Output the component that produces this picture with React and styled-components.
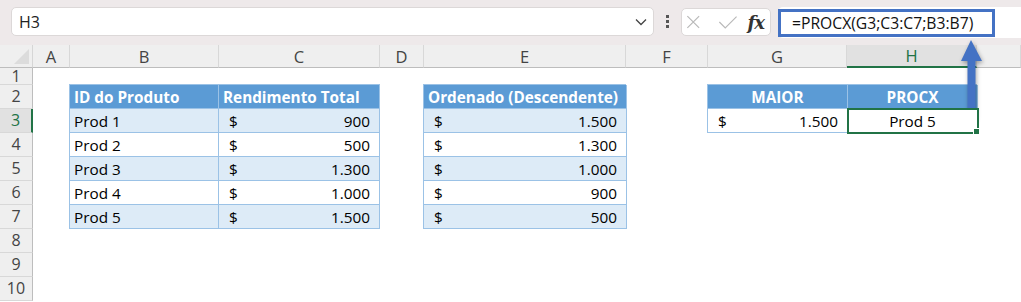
import styled, { createGlobalStyle } from "styled-components";

const GlobalStyle = createGlobalStyle`
  html, body {
    margin: 0;
    padding: 0;
    background: #ffffff;
  }
  body {
    font-family: "Open Sans", "Noto Sans", sans-serif;
    overflow: hidden;
  }
`;

const Page = styled.div`
  position: relative;
  width: 1021px;
  height: 302px;
  overflow: hidden;
  background: #ffffff;
`;

/* formula bar */
const TopBar = styled.div`
  height: 45px;
  box-sizing: border-box;
  padding: 7px 0 0 11px;
  display: flex;
  align-items: flex-start;
  background: #eee9ea;
`;

const NameBox = styled.div`
  width: 643px;
  height: 29px;
  box-sizing: border-box;
  display: flex;
  align-items: center;
  justify-content: space-between;
  padding: 0 6px 0 7px;
  background: #fff;
  border: 1px solid #dcd8d8;
  border-radius: 5px;
  font-size: 16px;
  color: #222;
`;

const Dots = styled.div`
  width: 27px;
  height: 29px;
  display: flex;
  flex-direction: column;
  align-items: center;
  justify-content: center;
  gap: 2px;

  span {
    width: 3px;
    height: 3px;
    background: #555;
  }
`;

const ToolBox = styled.div`
  width: 90px;
  height: 28px;
  margin-top: 1px;
  box-sizing: border-box;
  display: flex;
  align-items: center;
  gap: 4px;
  padding: 0 6px 0 4px;
  background: #fff;
  border: 1px solid #dcd8d8;
  border-radius: 5px;
`;

const Fx = styled.span`
  margin-left: 6px;
  font-family: "DejaVu Serif", "Liberation Serif", serif;
  font-style: italic;
  font-weight: bold;
  font-size: 18px;
  color: #333;
  letter-spacing: -1px;
`;

const FormulaField = styled.div`
  flex: 1;
  margin-left: 7px;
  height: 31px;
  background: #fff;
  border-radius: 5px 0 0 5px;
  display: flex;
  align-items: flex-start;
`;

const FormulaHighlight = styled.div`
  width: 217px;
  height: 28px;
  margin-top: 2px;
  box-sizing: border-box;
  border: 3px solid #4472c4;
  padding-left: 11px;
  display: flex;
  align-items: center;
  font-size: 15.7px;
  color: #111;
  white-space: nowrap;
`;

/* sheet */
const Sheet = styled.div`
  display: grid;
  grid-template-columns: 33px 37px 149px 161px 44px 202px 82px 139px 130px 1fr;
  grid-template-rows: 23px 17px repeat(9, 24px);
`;

const Corner = styled.div`
  grid-column: 1;
  grid-row: 1;
  background: #efefef;
  border-bottom: 1px solid #bdbdbd;
  border-right: 1px solid #d6d6d6;
  position: relative;

  &::after {
    content: "";
    position: absolute;
    right: 3px;
    bottom: 3px;
    border-style: solid;
    border-width: 0 0 15px 15px;
    border-color: transparent transparent #dcdcdc transparent;
  }
`;

const ColHead = styled.div`
  grid-row: 1;
  display: flex;
  align-items: center;
  justify-content: center;
  background: ${(p) => (p.$active ? "#e1e1e1" : "#efefef")};
  border-bottom: ${(p) => (p.$active ? "2px solid #217346" : "1px solid #bdbdbd")};
  border-right: 1px solid #d8d8d8;
  font-size: 16.5px;
  line-height: 1;
  color: ${(p) => (p.$active ? "#217346" : "#444")};
  padding-top: 2px;
`;

const RowHead = styled.div`
  grid-column: 1;
  display: flex;
  align-items: center;
  justify-content: center;
  background: ${(p) => (p.$active ? "#e1e1e1" : "#efefef")};
  border-right: ${(p) => (p.$active ? "2px solid #217346" : "1px solid #bdbdbd")};
  border-bottom: 1px solid #d8d8d8;
  font-size: 16px;
  line-height: 15px;
  color: ${(p) => (p.$active ? "#217346" : "#444")};
`;

const Table = styled.div`
  grid-column: ${(p) => p.$col};
  grid-row: ${(p) => p.$row};
  display: grid;
  grid-template-columns: ${(p) => p.$cols};
  grid-auto-rows: 1fr;
  border-left: 1px solid #9bc2e6;
  border-top: 1px solid #9bc2e6;
  box-sizing: border-box;
  margin-left: -1px;
  margin-top: -1px;
  height: calc(100% + 1px);
  font-size: 15.3px;
  color: #000;
`;

const Cell = styled.div`
  position: relative;
  display: flex;
  align-items: center;
  justify-content: ${(p) => p.$align || "flex-start"};
  padding: 1px 9px 0 ${(p) => (p.$align === "center" ? "9px" : "4px")};
  box-sizing: border-box;
  min-width: 0;
  white-space: nowrap;
  border-right: 1px solid #9bc2e6;
  border-bottom: 1px solid #9bc2e6;
  background: ${(p) => (p.$head ? "#5b9bd5" : p.$band ? "#ddebf7" : "#ffffff")};
  color: ${(p) => (p.$head ? "#ffffff" : "#000")};
  font-weight: ${(p) => (p.$head ? 700 : 400)};

  ${(p) =>
    p.$selected &&
    `
    outline: 2px solid #217346;
    outline-offset: -1px;
    z-index: 1;
    &::after {
      content: "";
      position: absolute;
      right: -3px;
      bottom: -3px;
      width: 5px;
      height: 5px;
      background: #217346;
      border: 1px solid #fff;
    }
  `}
`;

const Money = styled(Cell)`
  justify-content: space-between;
  padding-left: 10px;
`;

const Arrow = styled.svg`
  position: absolute;
  left: 954px;
  top: 36px;
  overflow: visible;
  filter: drop-shadow(1px 2px 2px rgba(0, 0, 0, 0.35));
`;

const columns = ["A", "B", "C", "D", "E", "F", "G", "H", ""];

const products = [
  ["Prod 1", "900"],
  ["Prod 2", "500"],
  ["Prod 3", "1.300"],
  ["Prod 4", "1.000"],
  ["Prod 5", "1.500"],
];

const sorted = ["1.500", "1.300", "1.000", "900", "500"];

function ChevronIcon() {
  return (
    <svg width="12" height="8" viewBox="0 0 12 8">
      <path d="M1 1.5 L6 6.5 L11 1.5" fill="none" stroke="#444" strokeWidth="1.3" />
    </svg>
  );
}

function CrossIcon() {
  return (
    <svg width="16" height="16" viewBox="0 0 16 16">
      <path d="M1.5 1.5 L14.5 14.5 M14.5 1.5 L1.5 14.5" stroke="#b9b9b9" strokeWidth="1.3" fill="none" />
    </svg>
  );
}

function CheckIcon() {
  return (
    <svg width="22" height="16" viewBox="0 0 22 16">
      <path d="M1.5 8 L8 14.5 L20.5 2" stroke="#b9b9b9" strokeWidth="1.3" fill="none" />
    </svg>
  );
}

export default function App() {
  return (
    <Page>
      <GlobalStyle />
      <TopBar>
        <NameBox>
          <span>H3</span>
          <ChevronIcon />
        </NameBox>
        <Dots>
          <span />
          <span />
          <span />
        </Dots>
        <ToolBox>
          <CrossIcon />
          <span style={{ width: 10 }} />
          <CheckIcon />
          <Fx>fx</Fx>
        </ToolBox>
        <FormulaField>
          <FormulaHighlight>=PROCX(G3;C3:C7;B3:B7)</FormulaHighlight>
        </FormulaField>
      </TopBar>

      <Sheet>
        <Corner />
        {columns.map((c, i) => (
          <ColHead key={i} $active={c === "H"} style={{ gridColumn: i + 2 }}>
            {c}
          </ColHead>
        ))}
        {Array.from({ length: 10 }, (_, i) => (
          <RowHead key={i} $active={i === 2} style={{ gridRow: i + 2 }}>
            {i + 1}
          </RowHead>
        ))}

        <Table $col="3 / 5" $row="3 / 9" $cols="149px 161px">
          <Cell $head>ID do Produto</Cell>
          <Cell $head>Rendimento Total</Cell>
          {products.map(([name, value], i) => [
            <Cell key={name} $band={i % 2 === 0}>
              {name}
            </Cell>,
            <Money key={name + "v"} $band={i % 2 === 0}>
              <span>$</span>
              <span>{value}</span>
            </Money>,
          ])}
        </Table>

        <Table $col="6 / 7" $row="3 / 9" $cols="203px">
          <Cell $head>Ordenado (Descendente)</Cell>
          {sorted.map((value, i) => (
            <Money key={i} $band={i % 2 === 0}>
              <span>$</span>
              <span>{value}</span>
            </Money>
          ))}
        </Table>

        <Table $col="8 / 10" $row="3 / 5" $cols="140px 130px">
          <Cell $head $align="center">
            MAIOR
          </Cell>
          <Cell $head $align="center">
            PROCX
          </Cell>
          <Money>
            <span>$</span>
            <span>1.500</span>
          </Money>
          <Cell $align="center" $selected>
            Prod 5
          </Cell>
        </Table>
      </Sheet>

      <Arrow width="36" height="90" viewBox="0 0 36 90">
        <path d="M17 4 L28 25 L21.5 25 L21.5 82 Q17.5 87 13.5 82 L13.5 25 L7 25 Z" fill="#4472c4" />
      </Arrow>
    </Page>
  );
}
